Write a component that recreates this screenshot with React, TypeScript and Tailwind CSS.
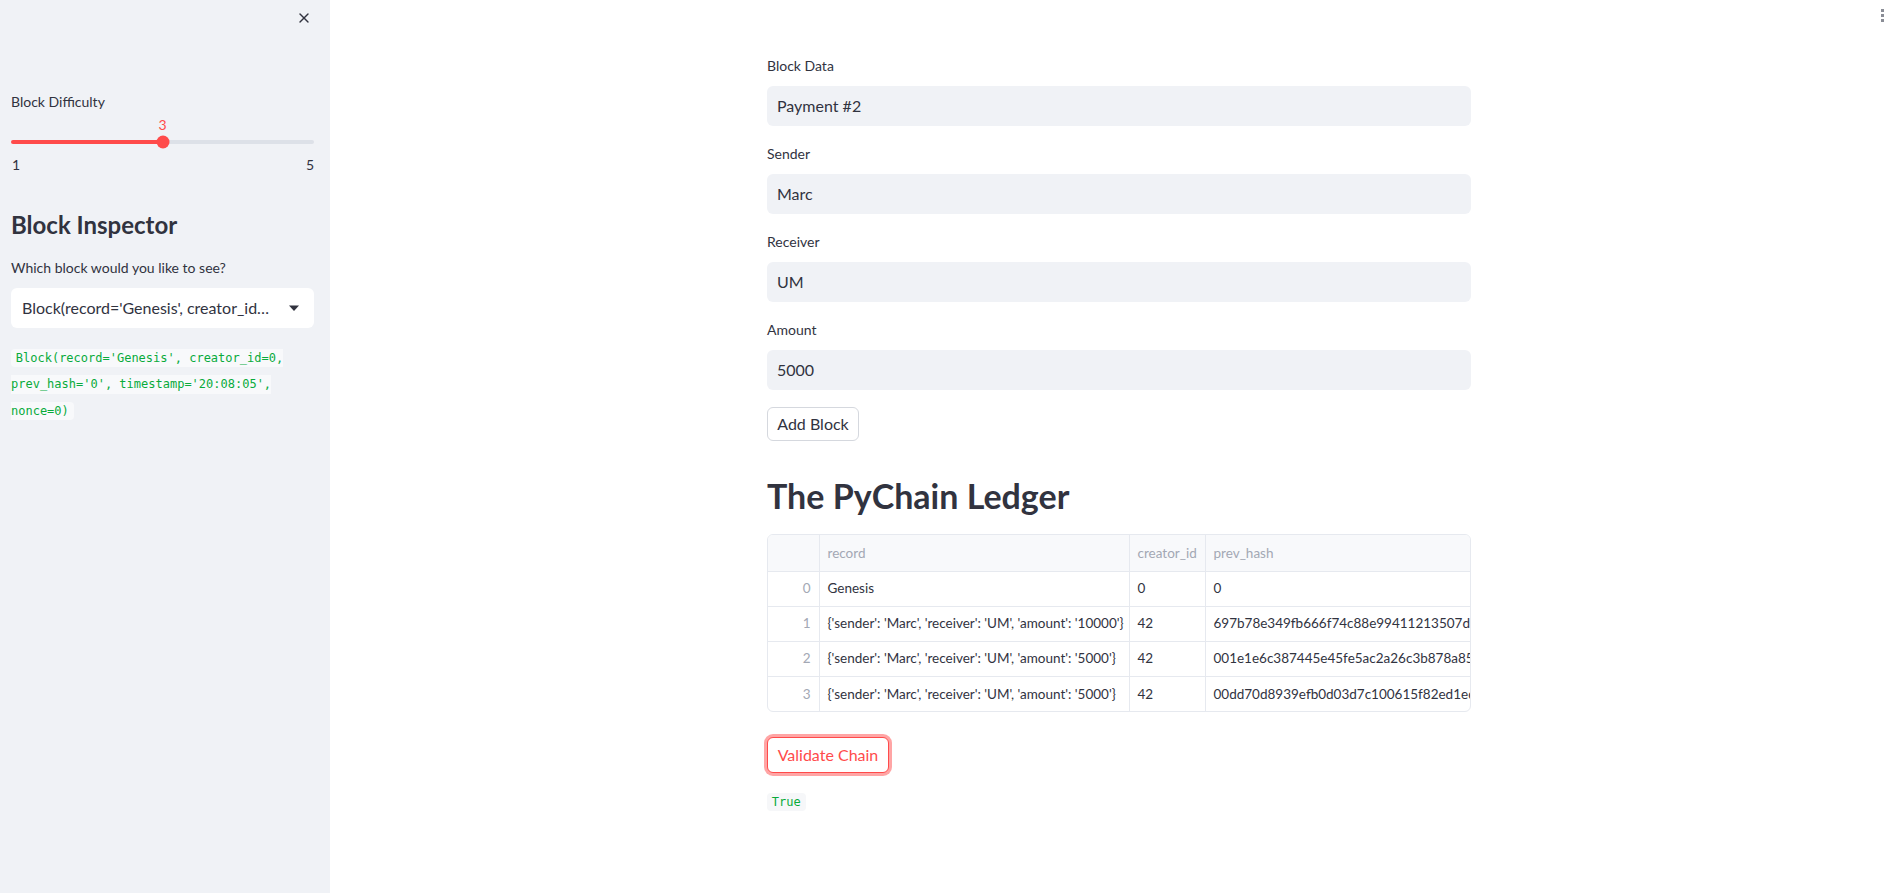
import { X } from 'lucide-react'

const font = { fontFamily: 'Lato, "Noto Sans", sans-serif' }

const rows = [
  { i: 0, record: 'Genesis', creator: '0', hash: '0' },
  {
    i: 1,
    record: "{'sender': 'Marc', 'receiver': 'UM', 'amount': '10000'}",
    creator: '42',
    hash: '697b78e349fb666f74c88e99411213507d7315c4b1e2a9f0d3c8e7a61b5f2d94',
  },
  {
    i: 2,
    record: "{'sender': 'Marc', 'receiver': 'UM', 'amount': '5000'}",
    creator: '42',
    hash: '001e1e6c387445e45fe5ac2a26c3b878a859ffc2d81e0a4b7c63f95e2d1a8b07',
  },
  {
    i: 3,
    record: "{'sender': 'Marc', 'receiver': 'UM', 'amount': '5000'}",
    creator: '42',
    hash: '00dd70d8939efb0d03d7c100615f82ed1ed1a6c4f9b2e85d7a03c1f64e9b2d58',
  },
]

function Field({ label, value }: { label: string; value: string }) {
  return (
    <div className="mb-[18px]">
      <div className="h-5 text-[14px] leading-5 text-[#31333f]">{label}</div>
      <div className="mt-[10px] flex h-10 items-center rounded-md bg-[#f0f2f6] px-[10px] text-[16px] text-[#31333f]">
        {value}
      </div>
    </div>
  )
}

export default function App() {
  return (
    <div className="flex h-[893px] w-full overflow-hidden bg-white text-[#31333f]" style={font}>
      {/* Sidebar */}
      <aside className="relative h-full w-[330px] shrink-0 bg-[#f0f2f6] pl-[11px] pr-[16px] pt-[92px]">
        <button className="absolute right-[18px] top-[10px] text-[#31333f]">
          <X className="h-[16px] w-[16px]" strokeWidth={2} />
        </button>

        <div className="h-5 text-[14px] leading-5">Block Difficulty</div>

        {/* Slider */}
        <div className="relative mt-[5px] h-4">
          <span className="absolute left-1/2 top-0 -translate-x-1/2 text-[14px] leading-4 text-[#ff4b4b]">3</span>
        </div>
        <div className="relative mt-[7px] flex h-1 w-full">
          <div className="h-1 w-1/2 rounded-l-full bg-[#ff4b4b]" />
          <div className="h-1 w-1/2 rounded-r-full bg-[#dde1e8]" />
          <div className="absolute left-1/2 top-1/2 h-[13px] w-[13px] -translate-x-1/2 -translate-y-1/2 rounded-full bg-[#ff4b4b]" />
        </div>
        <div className="mt-[13px] flex h-4 justify-between text-[14px] leading-4">
          <span className="pl-[1px]">1</span>
          <span>5</span>
        </div>

        <h2 className="mt-[36px] h-8 text-[24px] font-bold leading-8">Block Inspector</h2>

        <div className="mt-[17px] h-5 text-[14px] leading-5">Which block would you like to see?</div>

        <div className="mt-[10px] flex h-10 items-center justify-between rounded-md bg-white pl-[11px] pr-[14px]">
          <span className="w-[250px] truncate text-[16px]">
            Block(record='Genesis', creator_id=0, prev_hash='0', timestamp='20:08:05', nonce=0)
          </span>
          <svg width="12" height="7" viewBox="0 0 12 7">
            <path d="M1 0.5 L11 0.5 L6 6 Z" fill="#31333f" />
          </svg>
        </div>

        <p className="mt-[17px] text-[12px] leading-[25.5px]">
          <code
            className="rounded bg-[#f8f9fb] px-[0.4em] py-[0.2em] text-[#09ab3b]"
            style={{ fontFamily: '"DejaVu Sans Mono", "Liberation Mono", monospace' }}
          >
            Block(record='Genesis', creator_id=0, prev_hash='0', timestamp='20:08:05', nonce=0)
          </code>
        </p>
      </aside>

      {/* Main */}
      <main className="relative h-full flex-1">
        <div className="absolute right-0 top-[9px] flex flex-col gap-[2px]">
          <span className="h-[3px] w-[3px] bg-[#8a8d96]" />
          <span className="h-[3px] w-[3px] bg-[#8a8d96]" />
          <span className="h-[3px] w-[3px] bg-[#8a8d96]" />
        </div>

        <div className="ml-[437px] w-[704px] pt-[56px]">
          <Field label="Block Data" value="Payment #2" />
          <Field label="Sender" value="Marc" />
          <Field label="Receiver" value="UM" />
          <Field label="Amount" value="5000" />

          <button className="-mt-[1px] flex h-[34px] w-[92px] items-center justify-center rounded-md border border-[#d5d8de] bg-white text-[16px] text-[#31333f]">
            Add Block
          </button>

          <h1 className="mt-[33px] h-[44px] text-[34px] font-bold leading-[44px] text-[#31333f]">The PyChain Ledger</h1>

          <div className="mt-[16px] overflow-hidden rounded-md border border-[#e6e9ef]">
            <table className="w-[1000px] table-fixed border-collapse text-[13.5px]">
              <colgroup>
                <col className="w-[51px]" />
                <col className="w-[310px]" />
                <col className="w-[76px]" />
                <col className="w-[563px]" />
              </colgroup>
              <thead>
                <tr className="h-[36px] bg-[#f8f9fb] text-[#a3a8b4]">
                  <th className="border-r border-b border-[#e6e9ef]" />
                  <th className="border-r border-b border-[#e6e9ef] px-2 text-left font-normal">record</th>
                  <th className="border-r border-b border-[#e6e9ef] px-2 text-left font-normal">creator_id</th>
                  <th className="border-b border-[#e6e9ef] px-2 text-left font-normal">prev_hash</th>
                </tr>
              </thead>
              <tbody>
                {rows.map((r, idx) => (
                  <tr key={r.i} className="h-[35px]">
                    <td className={`border-r border-[#e6e9ef] px-2 text-right text-[#a3a8b4] ${idx < rows.length - 1 ? 'border-b' : ''}`}>
                      {r.i}
                    </td>
                    <td className={`whitespace-nowrap border-r border-[#e6e9ef] px-2 ${idx < rows.length - 1 ? 'border-b' : ''}`}>
                      {r.record}
                    </td>
                    <td className={`border-r border-[#e6e9ef] px-2 ${idx < rows.length - 1 ? 'border-b' : ''}`}>{r.creator}</td>
                    <td className={`whitespace-nowrap border-[#e6e9ef] px-2 ${idx < rows.length - 1 ? 'border-b' : ''}`}>{r.hash}</td>
                  </tr>
                ))}
              </tbody>
            </table>
          </div>

          <button className="mt-[25px] flex h-[36px] w-[122px] items-center justify-center rounded-md border border-[#ff4b4b] bg-white text-[16px] text-[#ff4b4b] ring-[3px] ring-[#ff4b4b]/50">
            Validate Chain
          </button>

          <div className="mt-[15px]">
            <code
              className="rounded bg-[#f6f7f9] px-[0.4em] py-[0.2em] text-[12px] text-[#09ab3b]"
              style={{ fontFamily: '"DejaVu Sans Mono", "Liberation Mono", monospace' }}
            >
              True
            </code>
          </div>
        </div>
      </main>
    </div>
  )
}
